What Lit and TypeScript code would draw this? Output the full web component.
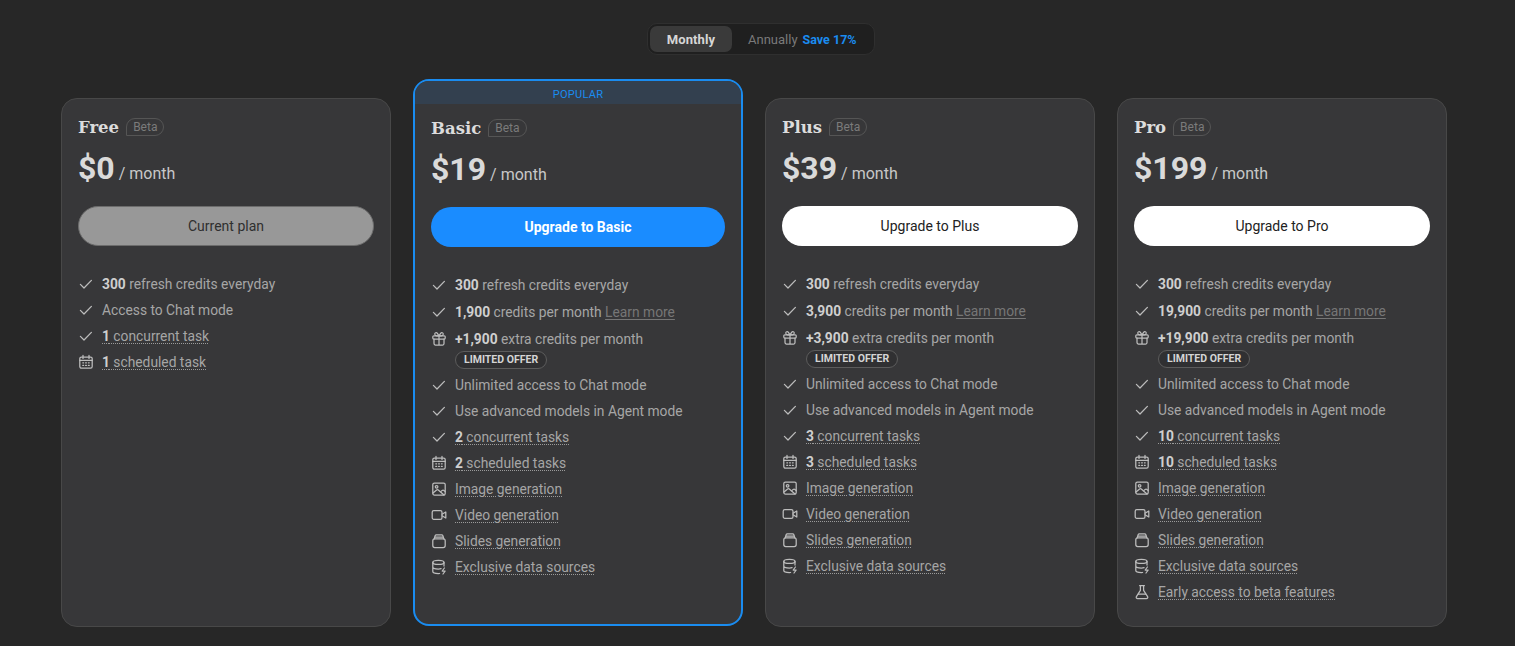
import { LitElement, html, css, svg } from "lit";
import { customElement } from "lit/decorators.js";

const icons: Record<string, unknown> = {
  check: svg`<path d="M2.400 8.400 6 12 13.400 4.400"/>`,
  calendar: svg`<rect x="1.800" y="3" width="12.400" height="11.200" rx="1.600"/><path d="M1.800 6.400h12.400M5 1.400v3M11 1.400v3"/><path d="M4.800 8.800h.8M7.600 8.800h.8M10.400 8.800h.8M4.800 11.400h.8M7.600 11.400h.8M10.400 11.400h.8"/>`,
  gift: svg`<rect x="1.800" y="4.800" width="12.400" height="3.200" rx="1"/><path d="M3 8v4.600a1.400 1.400 0 0 0 1.400 1.400h7.200a1.400 1.400 0 0 0 1.400-1.400V8M8 4.800V14M8 4.800 6.400 2.400C5.400 1 3.600 1.800 3.800 3.200c.1.900.8 1.600 1.700 1.600H8ZM8 4.800l1.600-2.400c1-1.400 2.800-.6 2.600.8-.1.900-.8 1.600-1.700 1.600H8Z"/>`,
  image: svg`<rect x="1.800" y="2" width="12.400" height="12" rx="1.600"/><circle cx="5.600" cy="5.800" r="1.300"/><path d="m2 12 3.600-3c.5-.4 1.200-.4 1.700 0L13 14"/><path d="m9.800 10.600 1.400-1.200c.5-.4 1.200-.4 1.700 0l1.300 1.100"/>`,
  video: svg`<rect x="1.200" y="3.600" width="9.800" height="8.800" rx="1.600"/><path d="M11 7.200 14.800 5v6L11 8.800"/>`,
  slides: svg`<rect x="1.800" y="5.800" width="12.400" height="8.800" rx="2"/><path d="M3.200 5.800 4.200 2.600c.2-.5.6-.8 1.100-.8h5.400c.5 0 .9.300 1.100.8l1 3.200"/><path d="M4 4h8"/>`,
  database: svg`<ellipse cx="7.400" cy="3.400" rx="5.600" ry="2"/><path d="M1.800 3.400v9.200c0 1.100 2.500 2 5.600 2 .4 0 .8 0 1.200-.1M13 3.400v3.600M1.800 8c0 1.100 2.500 2 5.600 2 1 0 1.900-.1 2.700-.3"/><path d="m13.400 9-2.200 3h3l-2.200 3"/>`,
  flask: svg`<path d="M5.600 1.600h4.800M6.400 1.600v4.800L2.400 12.600c-.6 1 .1 1.900 1.100 1.900h9c1 0 1.700-.9 1.100-1.900L9.600 6.400V1.600"/><path d="M4.400 10.200h7.200"/>`,
};

type Feature = { icon: string; bold?: string; text: string; dotted?: boolean; learn?: boolean; offer?: boolean };
type Plan = { name: string; price: string; btn: string; kind: string; popular?: boolean; features: Feature[] };

const paid = (credits: string, concurrent: string, scheduled: string): Feature[] => [
  { icon: "check", bold: "300", text: " refresh credits everyday" },
  { icon: "check", bold: credits, text: " credits per month", learn: true },
  { icon: "gift", bold: "+" + credits, text: " extra credits per month", offer: true },
  { icon: "check", text: "Unlimited access to Chat mode" },
  { icon: "check", text: "Use advanced models in Agent mode" },
  { icon: "check", bold: concurrent, text: " concurrent tasks", dotted: true },
  { icon: "calendar", bold: scheduled, text: " scheduled tasks", dotted: true },
  { icon: "image", text: "Image generation", dotted: true },
  { icon: "video", text: "Video generation", dotted: true },
  { icon: "slides", text: "Slides generation", dotted: true },
  { icon: "database", text: "Exclusive data sources", dotted: true },
];

const plans: Plan[] = [
  {
    name: "Free", price: "$0", btn: "Current plan", kind: "current",
    features: [
      { icon: "check", bold: "300", text: " refresh credits everyday" },
      { icon: "check", text: "Access to Chat mode" },
      { icon: "check", bold: "1", text: " concurrent task", dotted: true },
      { icon: "calendar", bold: "1", text: " scheduled task", dotted: true },
    ],
  },
  { name: "Basic", price: "$19", btn: "Upgrade to Basic", kind: "blue", popular: true, features: paid("1,900", "2", "2") },
  { name: "Plus", price: "$39", btn: "Upgrade to Plus", kind: "white", features: paid("3,900", "3", "3") },
  {
    name: "Pro", price: "$199", btn: "Upgrade to Pro", kind: "white",
    features: [...paid("19,900", "10", "10"), { icon: "flask", text: "Early access to beta features", dotted: true }],
  },
];

@customElement("app-root")
export class AppRoot extends LitElement {
  static styles = css`
    :host { display: block; height: 646px; overflow: hidden; background: #272727; font-family: "Roboto", "Noto Sans", sans-serif; color: #a6a6a6; font-size: 13.8px; }
    .page { padding: 23px 68px 0 61px; display: flex; flex-direction: column; }
    .toggle { align-self: center; margin-left: 14px; display: flex; align-items: center; box-sizing: border-box; height: 32px; width: 228px; padding: 2px; background: #1f1f1f; border: 1px solid #2f2f2f; border-radius: 10px; font-size: 13px; }
    .tab { box-sizing: border-box; width: 82px; height: 26px; display: flex; align-items: center; justify-content: center; background: #3a3a3a; border-radius: 7px; color: #d6d6d6; font-weight: 700; letter-spacing: 0.1px; }
    .annual { margin-left: 16px; color: #7a7a7a; }
    .save { margin-left: 5px; color: #1a8cf0; font-weight: 700; font-size: 12.5px; }
    .cards { display: grid; grid-template-columns: repeat(4, 330px); gap: 22px; margin-top: 24px; align-items: end; }
    .card { box-sizing: border-box; height: 529px; background: #373739; border: 1px solid #484848; border-radius: 16px; padding: 16px; }
    .card.popular { height: 547px; border: 2px solid #1a8cf0; padding: 0 16px 16px; margin-bottom: 1px; }
    .banner { box-sizing: border-box; margin: 0 -16px 12px; padding-top: 3px; height: 23px; background: #33404f; border-radius: 14px 14px 0 0; color: #1a8cf0; font-size: 11px; display: flex; align-items: center; justify-content: center; letter-spacing: 0.3px; }
    .title { display: flex; align-items: center; gap: 7px; height: 24px; }
    .name { font-family: "DejaVu Serif", serif; font-weight: 700; font-size: 16.5px; color: #dcdcdc; }
    .beta { box-sizing: border-box; height: 18px; padding: 0 6px; display: flex; align-items: center; border: 1px solid #555; border-radius: 9px 9px 9px 0; color: #7b7b7b; font-size: 12px; }
    .price { display: flex; align-items: baseline; gap: 4px; margin-top: 11px; height: 36px; color: #dadada; }
    .amount { font-size: 32px; font-weight: 700; line-height: 36px; }
    .per { font-size: 16px; color: #c8c8c8; }
    .btn { box-sizing: border-box; height: 40px; margin-top: 20px; border-radius: 20px; display: flex; align-items: center; justify-content: center; font-size: 14px; font-weight: 450; }
    .current { background: #989898; color: #2f2f2f; border: 1px solid #6c6c6c; }
    .blue { background: #1a8cff; color: #fff; font-weight: 700; }
    .white { background: #fff; color: #222; }
    .features { list-style: none; padding: 0; margin: 28px 0 0; display: flex; flex-direction: column; gap: 6px; }
    li { display: flex; gap: 8px; line-height: 20px; }
    li.tall { line-height: 22px; }
    .ic { flex: none; width: 16px; height: 20px; display: flex; align-items: center; }
    li.tall .ic { height: 22px; }
    svg { width: 16px; height: 16px; fill: none; stroke: #bdbdbd; stroke-width: 1.250; stroke-linecap: round; stroke-linejoin: round; }
    b { color: #cfcfcf; font-weight: 700; }
    .dotted { text-decoration: underline dotted #9a9a9a 1px; text-underline-offset: 2px; }
    .learn { color: #767676; text-decoration: underline; text-underline-offset: 2px; }
    .offer { box-sizing: border-box; width: fit-content; height: 18px; margin-top: 2px; padding: 0 8px; display: flex; align-items: center; border: 1px solid #5c5c5c; border-radius: 9px; background: #303032; color: #d4d4d4; font-size: 10.5px; font-weight: 700; }
  `;

  private feature(f: Feature) {
    return html`<li class=${f.learn ? "tall" : ""}>
      <span class="ic"><svg viewBox="0 0 16 16">${icons[f.icon]}</svg></span>
      <div>
        <span class=${f.dotted ? "dotted" : ""}>${f.bold ? html`<b>${f.bold}</b>` : ""}${f.text}</span>
        ${f.learn ? html` <span class="learn">Learn more</span>` : ""}
        ${f.offer ? html`<div class="offer">LIMITED OFFER</div>` : ""}
      </div>
    </li>`;
  }

  render() {
    return html`<div class="page">
      <div class="toggle">
        <div class="tab">Monthly</div>
        <span class="annual">Annually</span>
        <span class="save">Save 17%</span>
      </div>
      <div class="cards">
        ${plans.map(
          (p) => html`<section class="card ${p.popular ? "popular" : ""}">
            ${p.popular ? html`<div class="banner">POPULAR</div>` : ""}
            <div class="title"><span class="name">${p.name}</span><span class="beta">Beta</span></div>
            <div class="price"><span class="amount">${p.price}</span><span class="per">/ month</span></div>
            <div class="btn ${p.kind}">${p.btn}</div>
            <ul class="features">${p.features.map((f) => this.feature(f))}</ul>
          </section>`
        )}
      </div>
    </div>`;
  }
}
